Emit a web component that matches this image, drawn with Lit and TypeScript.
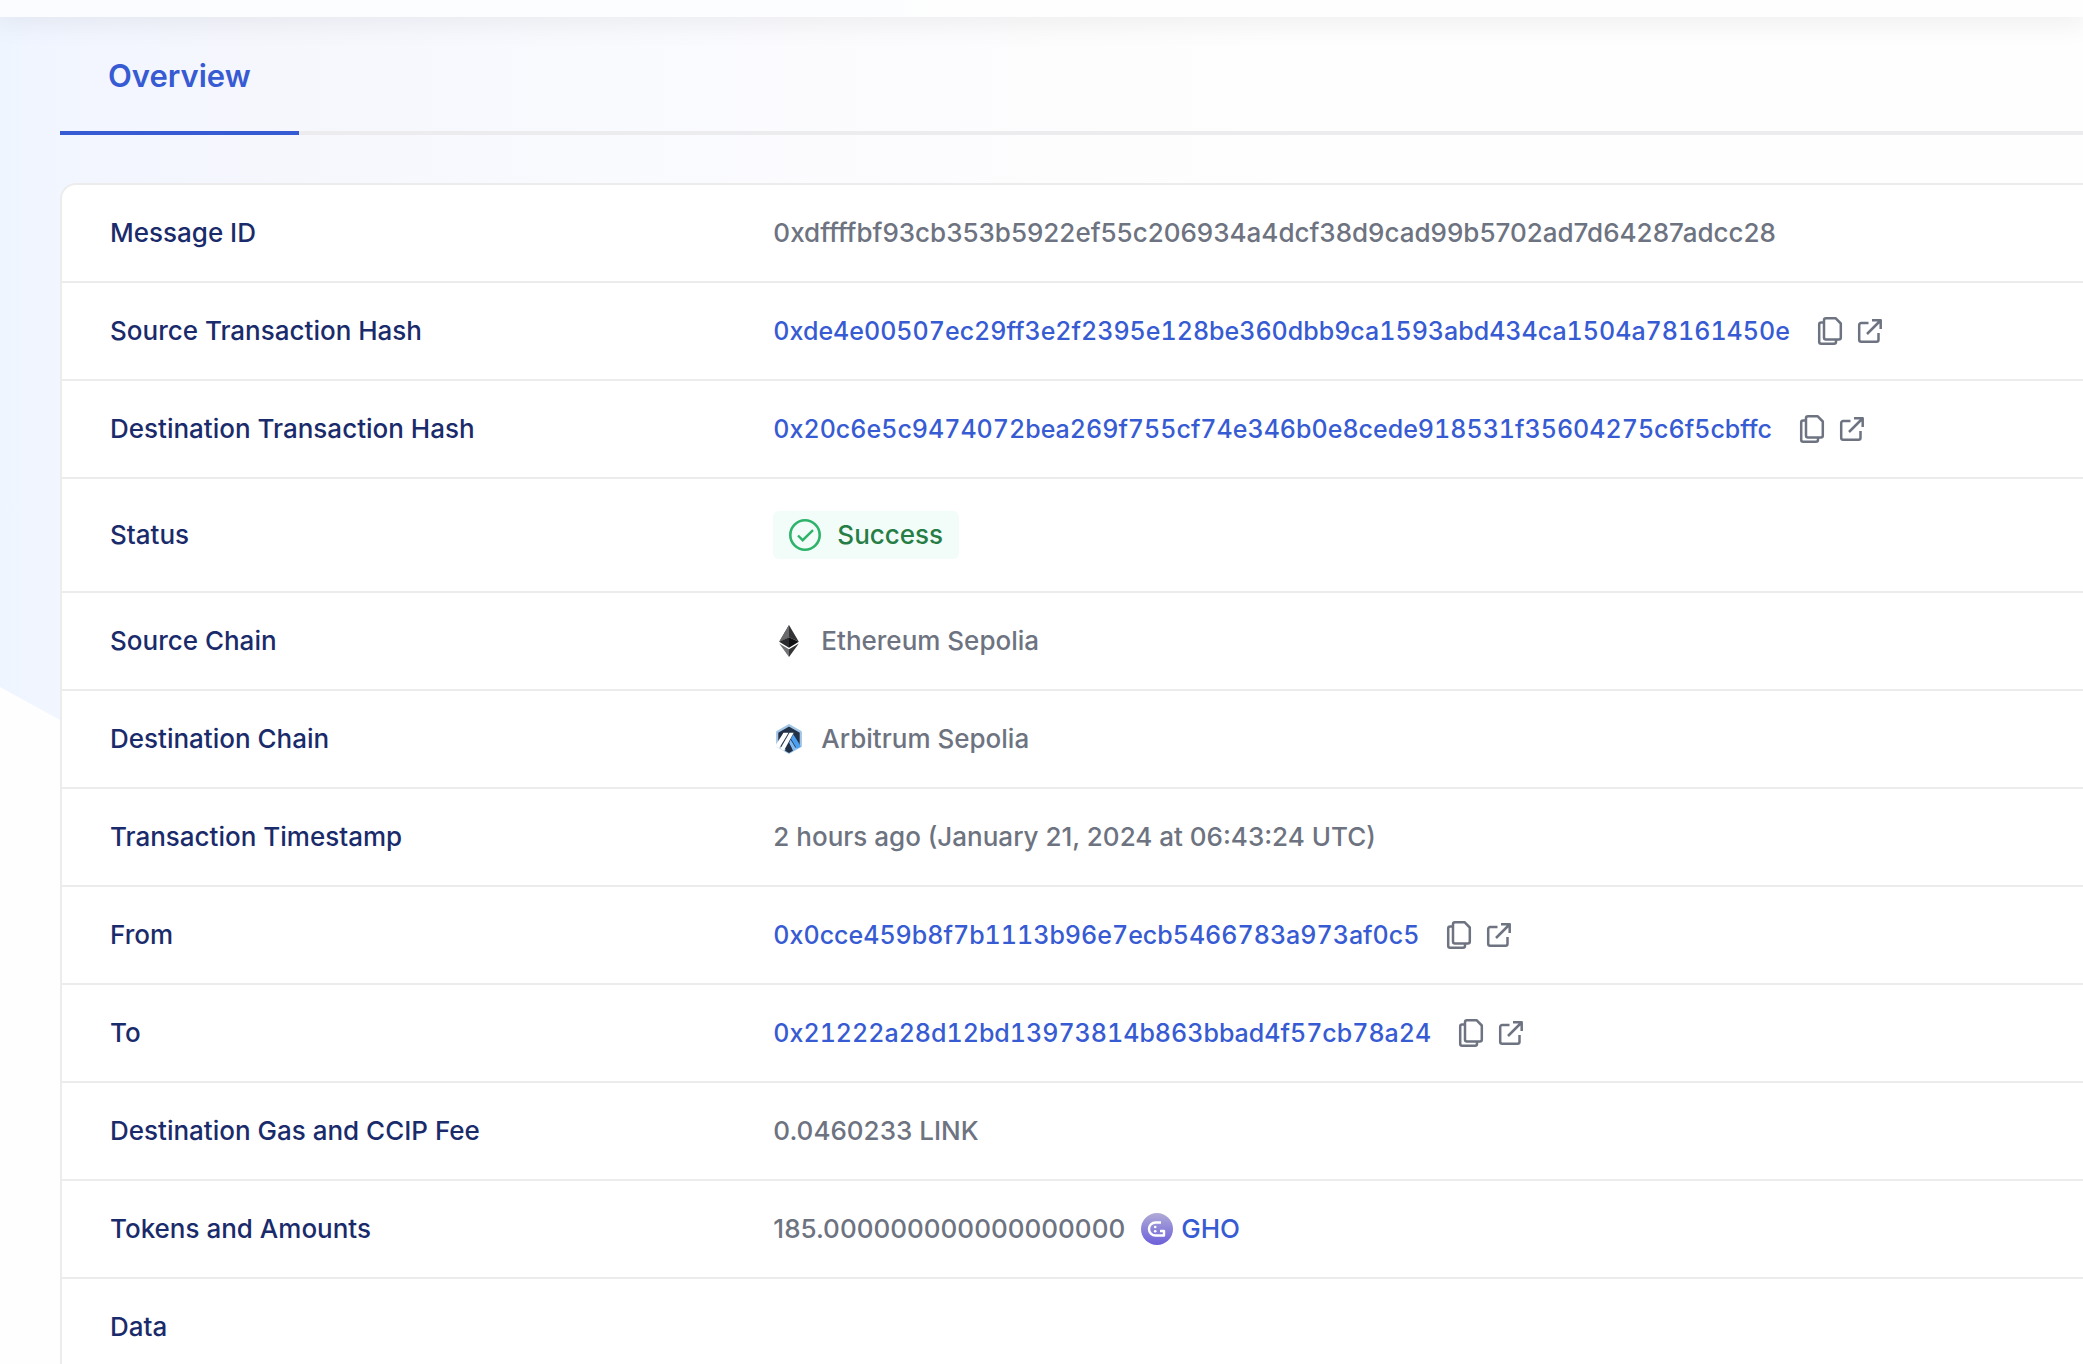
import { LitElement, html, css, svg, TemplateResult } from "lit";
import { customElement } from "lit/decorators.js";

interface Row {
  label: string;
  value: TemplateResult | string;
}

const ethereumIcon = svg`
  <path fill="#3d3d3f" d="M16 0v12L6.2 16.8z"/>
  <path fill="#6b6b6d" d="M16 0L6.2 16.8 16 12.3z"/>
  <path fill="#343436" d="M16 0l9.8 16.8L16 12.3z"/>
  <path fill="#2b2b2d" d="M6.2 16.8L16 12.3v10.4z"/>
  <path fill="#111113" d="M25.8 16.8L16 12.3v10.4z"/>
  <path fill="#727274" d="M6.2 18.4L16 24.2V32z"/>
  <path fill="#353537" d="M25.8 18.4L16 24.2V32z"/>`;

const arbitrumIcon = svg`
  <path fill="#213147" stroke="#a3c6e6" stroke-width="2.2" stroke-linejoin="round" d="M16 2.2l11.8 6.8v14L16 29.8 4.2 23V9z"/>
  <path fill="#4a9ff0" d="M20.3 11.2l7.6 12.2-4 2.3-6-9.9z"/>
  <path fill="#7fbaf3" d="M17.5 16.4l5.7 9.5-3.2 1.8-3.8-7.7z"/>
  <path fill="#ffffff" d="M10.5 9.8h5L6.2 25.3l-3.2-1.8v-2z"/>
  <path fill="#ffffff" d="M16.5 9.8h4.2L10.9 27.7l-3.6-1.9z"/>
  <path fill="#213147" d="M16 20.3l4 7.5-4 2.3-4-2.3z"/>`;

const ghoIcon = svg`
  <defs>
    <linearGradient id="gho" x1="0" y1="0" x2="0" y2="1">
      <stop offset="0" stop-color="#b0abd6"/>
      <stop offset="1" stop-color="#6c5fdb"/>
    </linearGradient>
  </defs>
  <circle cx="16" cy="16" r="16" fill="url(#gho)"/>
  <path fill="none" stroke="#fff" stroke-width="2.4" stroke-linejoin="round" d="M20 9.5h-5.500a6.500 6.500 0 0 0 0 13H23v-4.500h-4"/>
  <circle cx="14.2" cy="14" r="1.3" fill="#fff"/>
  <circle cx="14.2" cy="18.3" r="1.3" fill="#fff"/>`;

@customElement("hash-link")
export class HashLink extends LitElement {
  static properties = { value: { type: String } };
  declare value: string;

  static styles = css`
    :host {
      display: flex;
      align-items: center;
    }
    .hash {
      color: #375bd2;
      text-decoration: none;
      font-size: 25px;
      font-variant-numeric: tabular-nums;
      margin-right: 28px;
    }
    .action {
      display: flex;
      padding: 0;
      border: 0;
      background: none;
      color: #6d7380;
      cursor: pointer;
    }
    .copy {
      margin-right: 16px;
    }
    .glyph {
      fill: none;
      stroke: currentColor;
      stroke-width: 2.5;
      stroke-linejoin: round;
      overflow: visible;
    }
  `;

  render() {
    return html`
      <a class="hash" href="#${this.value}">${this.value}</a>
      <button class="action copy" type="button" aria-label="Copy">
        <svg class="glyph" width="24" height="28" viewBox="0 0 24 28">
          <path d="M8 1.2h9.5L22.8 6.5V20.5a2 2 0 0 1-2 2H8a2 2 0 0 1-2-2V3.2a2 2 0 0 1 2-2z" />
          <path d="M6 5.5H3.2a2 2 0 0 0-2 2V24.8a2 2 0 0 0 2 2H16a2 2 0 0 0 2-2v-2.300" />
        </svg>
      </button>
      <a class="action" href="#${this.value}" aria-label="Open in explorer">
        <svg class="glyph" width="24" height="24" viewBox="0 0 24 24">
          <path d="M10.5 4H3.2a2 2 0 0 0-2 2v14.800a2 2 0 0 0 2 2h15.300a2 2 0 0 0 2-2v-6.800" />
          <path d="M14 1.3h8.7V10M22.5 1.5L9 15" />
        </svg>
      </a>
    `;
  }
}

@customElement("app-root")
export class AppRoot extends LitElement {
  static styles = css`
    :host {
      display: block;
      position: relative;
      min-height: 100vh;
      overflow: hidden;
      background: #fefefe;
      font-family: Inter, "Liberation Sans", sans-serif;
      font-size: 26px;
      font-weight: 500;
      line-height: 32px;
    }
    .backdrop {
      position: absolute;
      inset: 0;
      background: linear-gradient(
        90deg,
        #eff5ff 0,
        #f3f6ff 5%,
        #f6f7fd 13%,
        #f9fafe 28%,
        #fcfcfe 45%,
        #fefefe 62%
      );
      clip-path: polygon(0 0, 100% 0, 100% calc(687px + 55vw), 0 687px);
    }
    .topbar {
      position: relative;
      height: 17px;
      background: linear-gradient(90deg, #fafcff 0, #fcfdff 30%, #fefefe 60%);
      box-shadow: 0 0 30px 4px rgba(0, 0, 0, 0.08);
    }
    .content {
      position: relative;
      padding-left: 60px;
    }
    .tabs {
      display: flex;
      box-shadow: inset 0 -4px #ececee;
      margin-bottom: 48px;
    }
    .tab {
      padding: 40px 48px 36px;
      border: 0;
      border-bottom: 4px solid #375bd2;
      background: none;
      color: #375bd2;
      font: inherit;
      font-size: 31px;
      font-weight: 600;
      line-height: 38px;
      cursor: pointer;
    }
    .card {
      border: 2px solid #ececec;
      border-right: 0;
      border-bottom: 0;
      border-top-left-radius: 16px;
      background: #fff;
      overflow: hidden;
    }
    .details {
      width: 100%;
      table-layout: fixed;
      border-collapse: separate;
      border-spacing: 0;
    }
    .label,
    .cell {
      padding: 32px 0;
      border-bottom: 2px solid #ececec;
      text-align: left;
      vertical-align: middle;
      white-space: nowrap;
    }
    .label {
      width: 35%;
      box-sizing: border-box;
      padding-left: 48px;
      color: #1a2b6b;
      font-weight: 500;
    }
    .cell {
      padding-left: 4px;
      color: #6d7380;
    }
    .value,
    .badge {
      display: flex;
      align-items: center;
      gap: 16px;
    }
    .badge {
      padding: 8px 16px;
      border-radius: 6px;
      background: #f2fcf8;
      color: #267e46;
    }
    .check {
      fill: none;
      stroke: #2eb36a;
    }
    .token {
      display: flex;
      align-items: center;
      gap: 8px;
      color: #375bd2;
      text-decoration: none;
    }
  `;

  private icon(shape: TemplateResult) {
    return html`<svg width="32" height="32" viewBox="0 0 32 32" aria-hidden="true">${shape}</svg>`;
  }

  private rows: Row[] = [
    { label: "Message ID", value: "0xdffffbf93cb353b5922ef55c206934a4dcf38d9cad99b5702ad7d64287adcc28" },
    {
      label: "Source Transaction Hash",
      value: html`<hash-link value="0xde4e00507ec29ff3e2f2395e128be360dbb9ca1593abd434ca1504a78161450e"></hash-link>`,
    },
    {
      label: "Destination Transaction Hash",
      value: html`<hash-link value="0x20c6e5c9474072bea269f755cf74e346b0e8cede918531f35604275c6f5cbffc"></hash-link>`,
    },
    {
      label: "Status",
      value: html`<span class="badge">
        <svg class="check" width="32" height="32" viewBox="0 0 32 32" aria-hidden="true">
          <circle cx="16" cy="16" r="14.7" stroke-width="2.6" />
          <path d="M9 16.5l4.7 4.7L24 11.2" stroke-width="2.4" />
        </svg>
        Success</span
      >`,
    },
    { label: "Source Chain", value: html`${this.icon(ethereumIcon)} Ethereum Sepolia` },
    { label: "Destination Chain", value: html`${this.icon(arbitrumIcon)} Arbitrum Sepolia` },
    { label: "Transaction Timestamp", value: "2 hours ago (January 21, 2024 at 06:43:24 UTC)" },
    { label: "From", value: html`<hash-link value="0x0cce459b8f7b1113b96e7ecb5466783a973af0c5"></hash-link>` },
    { label: "To", value: html`<hash-link value="0x21222a28d12bd13973814b863bbad4f57cb78a24"></hash-link>` },
    { label: "Destination Gas and CCIP Fee", value: "0.0460233 LINK" },
    {
      label: "Tokens and Amounts",
      value: html`185.000000000000000000 <a class="token" href="#gho">${this.icon(ghoIcon)} GHO</a>`,
    },
    { label: "Data", value: "" },
  ];

  render() {
    return html`
      <div class="backdrop"></div>
      <header class="topbar"></header>
      <main class="content">
        <div class="tabs" role="tablist">
          <button class="tab" type="button" role="tab" aria-selected="true">Overview</button>
        </div>
        <section class="card">
          <table class="details">
            <tbody>
              ${this.rows.map(
                (row) => html`<tr>
                  <th class="label" scope="row">${row.label}</th>
                  <td class="cell"><div class="value">${row.value}</div></td>
                </tr>`,
              )}
            </tbody>
          </table>
        </section>
      </main>
    `;
  }
}
